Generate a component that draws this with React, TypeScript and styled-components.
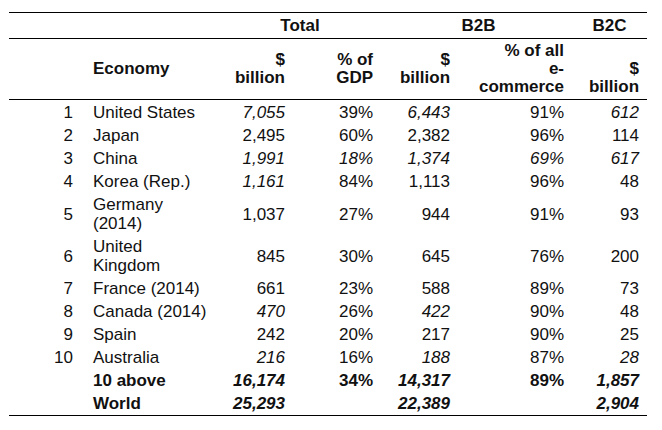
import React, { FC } from 'react';
import styled, { createGlobalStyle } from 'styled-components';

const GlobalStyle = createGlobalStyle`
	body {
		margin: 0;
		background: #fff;
		color: #111;
		font-family: "Liberation Sans", Arial, sans-serif;
	}
`;

const Page = styled.div`
	padding: 12px 15px 0 9px;
`;

const Table = styled.table`
	width: 638px;
	table-layout: fixed;
	border-collapse: separate;
	border-spacing: 0;
	font-size: 17px;
`;

const Col = styled.col<{ $w: number }>`
	width: ${(p) => p.$w}px;
`;

const GroupTh = styled.th<{ $shift?: number }>`
	border-top: 1px solid #000;
	border-bottom: 1px solid #000;
	padding: 3px ${(p) => (p.$shift && p.$shift > 0 ? p.$shift : 0)}px 3px
		${(p) => (p.$shift && p.$shift < 0 ? -p.$shift : 0)}px;
	line-height: 19px;
	font-weight: bold;
	text-align: center;
`;

const ColTh = styled.th<{ $align?: 'left' | 'right'; $valign?: 'middle' | 'bottom' }>`
	border-bottom: 1px solid #000;
	padding: 3px ${(p) => (p.$align === 'left' ? '0 3px 12px' : '8px 3px 0')};
	line-height: 18px;
	font-weight: bold;
	text-align: ${(p) => p.$align || 'right'};
	vertical-align: ${(p) => p.$valign || 'middle'};
`;

const Row = styled.tr<{ $last?: boolean }>`
	td {
		padding-top: 2px;
		padding-bottom: 2px;
		border-bottom: ${(p) => (p.$last ? '1px solid #000' : 'none')};
	}
	&:first-child td {
		padding-top: 3px;
	}
`;

const Rank = styled.td`
	padding-right: 8px;
	line-height: 19px;
	text-align: right;
	vertical-align: middle;
`;

const Name = styled.td<{ $bold?: boolean }>`
	padding-left: 12px;
	line-height: 19px;
	font-weight: ${(p) => (p.$bold ? 'bold' : 'normal')};
	vertical-align: middle;
`;

const Num = styled.td<{ $italic?: boolean; $bold?: boolean }>`
	padding-right: 8px;
	line-height: 19px;
	text-align: right;
	vertical-align: middle;
	font-style: ${(p) => (p.$italic ? 'italic' : 'normal')};
	font-weight: ${(p) => (p.$bold ? 'bold' : 'normal')};
`;

type Cell = [string, boolean?];

interface Entry {
	rank: string;
	name: React.ReactNode;
	bold?: boolean;
	cells: Cell[];
}

const rows: Entry[] = [
	{ rank: '1', name: 'United States', cells: [['7,055', true], ['39%'], ['6,443', true], ['91%'], ['612', true]] },
	{ rank: '2', name: 'Japan', cells: [['2,495'], ['60%'], ['2,382'], ['96%'], ['114']] },
	{ rank: '3', name: 'China', cells: [['1,991', true], ['18%', true], ['1,374', true], ['69%', true], ['617', true]] },
	{ rank: '4', name: 'Korea (Rep.)', cells: [['1,161', true], ['84%'], ['1,113'], ['96%'], ['48']] },
	{ rank: '5', name: <>Germany<br />(2014)</>, cells: [['1,037'], ['27%'], ['944'], ['91%'], ['93']] },
	{ rank: '6', name: <>United<br />Kingdom</>, cells: [['845'], ['30%'], ['645'], ['76%'], ['200']] },
	{ rank: '7', name: 'France (2014)', cells: [['661'], ['23%'], ['588'], ['89%'], ['73']] },
	{ rank: '8', name: 'Canada (2014)', cells: [['470', true], ['26%'], ['422', true], ['90%'], ['48']] },
	{ rank: '9', name: 'Spain', cells: [['242'], ['20%'], ['217'], ['90%'], ['25']] },
	{ rank: '10', name: 'Australia', cells: [['216', true], ['16%'], ['188', true], ['87%'], ['28', true]] },
	{ rank: '', name: '10 above', bold: true, cells: [['16,174', true], ['34%'], ['14,317', true], ['89%'], ['1,857', true]] },
	{ rank: '', name: 'World', bold: true, cells: [['25,293', true], [''], ['22,389', true], [''], ['2,904', true]] },
];

const App: FC = () => (
	<Page>
		<GlobalStyle />
		<Table>
			<colgroup>
				<Col $w={72} />
				<Col $w={146} />
				<Col $w={66} />
				<Col $w={88} />
				<Col $w={77} />
				<Col $w={114} />
				<Col $w={75} />
			</colgroup>
			<thead>
				<tr>
					<GroupTh colSpan={2} />
					<GroupTh colSpan={2} $shift={8}>Total</GroupTh>
					<GroupTh colSpan={2} $shift={-4}>B2B</GroupTh>
					<GroupTh>B2C</GroupTh>
				</tr>
				<tr>
					<ColTh />
					<ColTh $align="left">Economy</ColTh>
					<ColTh>$<br />billion</ColTh>
					<ColTh>% of<br />GDP</ColTh>
					<ColTh>$<br />billion</ColTh>
					<ColTh>% of all<br />e-<br />commerce</ColTh>
					<ColTh $valign="bottom">$<br />billion</ColTh>
				</tr>
			</thead>
			<tbody>
				{rows.map((r, i) => (
					<Row key={i} $last={i === rows.length - 1}>
						<Rank>{r.rank}</Rank>
						<Name $bold={r.bold}>{r.name}</Name>
						{r.cells.map(([v, it], j) => (
							<Num key={j} $italic={it} $bold={r.bold}>{v}</Num>
						))}
					</Row>
				))}
			</tbody>
		</Table>
	</Page>
);

export default App;
